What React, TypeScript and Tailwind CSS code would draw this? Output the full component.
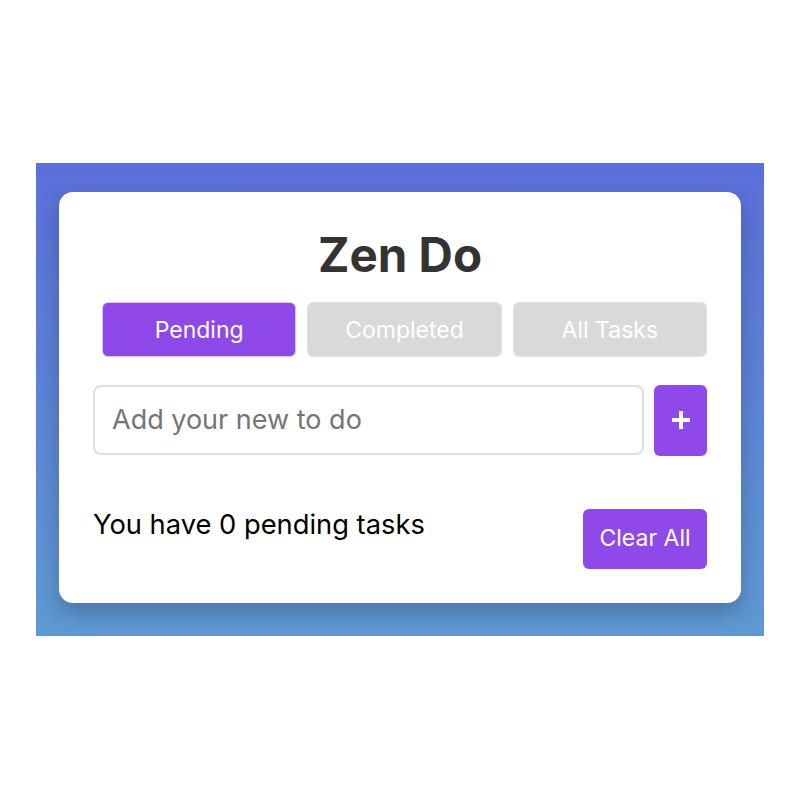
import React from "react";

export default function App() {
  return (
    <div className="w-[800px] h-[800px] bg-white flex justify-center pt-[163px]" style={{ fontFamily: "Inter, 'Noto Sans', sans-serif" }}>
      <div className="w-[728px] h-[473px] bg-gradient-to-b from-[#5b6ed9] to-[#5e9ad2] pt-[29px] px-[23px]">
        <div className="bg-white rounded-[14px] shadow-[0_10px_22px_rgba(0,0,0,0.22)] h-[411px] px-[34px] pt-[36px]">
          <h1 className="text-center text-[47.5px] font-bold text-[#333] leading-[1.15]">Zen Do</h1>
          <div className="flex gap-[11px] pl-[9px] mt-[19px]">
            <button className="flex-1 h-[55px] pt-[3px] rounded-[6px] bg-[#8e49e8] border border-[#d5c8ee] text-white text-[23px]">Pending</button>
            <button className="flex-1 h-[55px] pt-[3px] rounded-[6px] bg-[#d9d9d9] border border-[#e2e2e2] text-white text-[23px]">Completed</button>
            <button className="flex-1 h-[55px] pt-[3px] rounded-[6px] bg-[#d9d9d9] border border-[#e2e2e2] text-white text-[23px]">All Tasks</button>
          </div>
          <div className="flex gap-[10px] mt-[28px]">
            <input
              className="flex-1 h-[70px] border-2 border-[#dedede] rounded-[8px] px-[17px] text-[27px] outline-none placeholder:text-[#757575]"
              placeholder="Add your new to do"
            />
            <button className="w-[53px] h-[71px] rounded-[6px] bg-[#8e49e8] flex items-center justify-center">
              <svg width="22" height="22" viewBox="0 0 22 22">
                <path d="M11 2v18M2 11h18" stroke="white" strokeWidth="4" />
              </svg>
            </button>
          </div>
          <div className="flex justify-between items-start mt-[51px]">
            <p className="text-[27.3px] leading-[36px] text-black">You have 0 pending tasks</p>
            <button className="mt-[2px] w-[124px] h-[60px] rounded-[6px] bg-[#8e49e8] text-white text-[23px]">Clear All</button>
          </div>
        </div>
      </div>
    </div>
  );
}
